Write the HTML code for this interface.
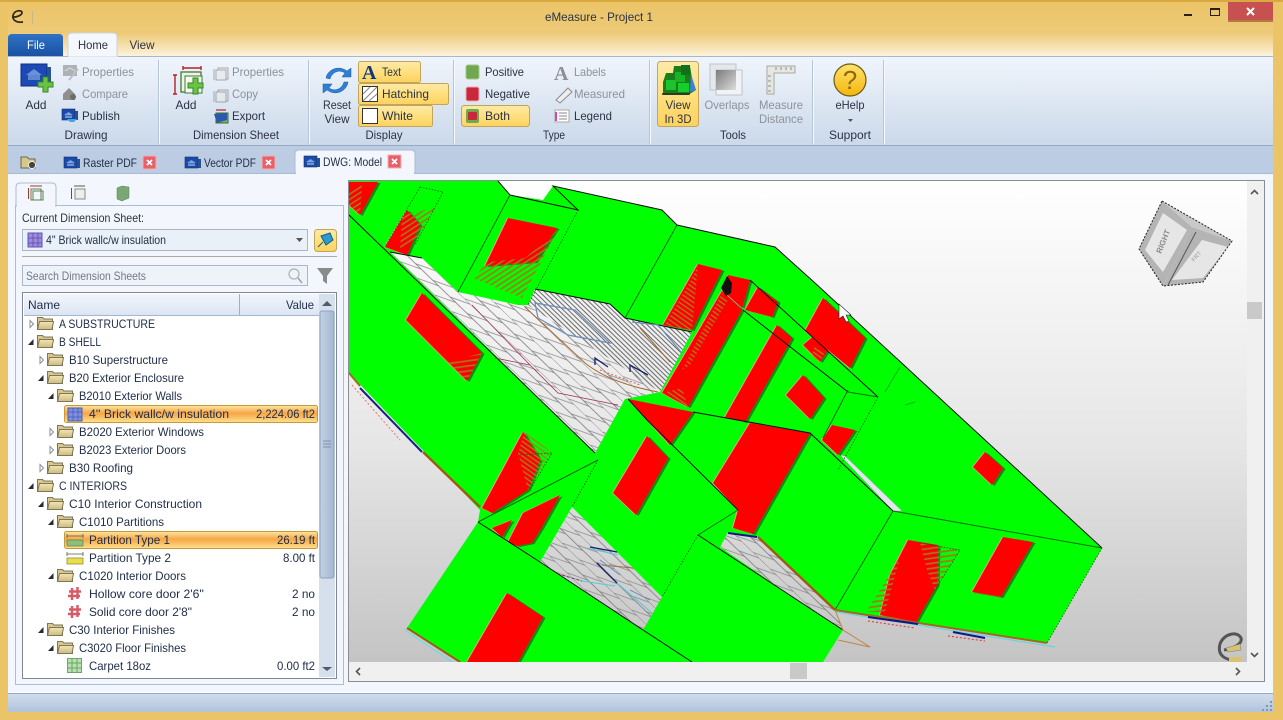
<!DOCTYPE html>
<html><head><meta charset="utf-8"><title>eMeasure - Project 1</title>
<style>
html,body{margin:0;padding:0;background:#ebc468;width:1283px;height:720px;overflow:hidden}
svg{display:block;position:absolute;left:0;top:0}
text{font-family:"Liberation Sans",sans-serif;font-size:12px;fill:#2b3242}
.g{fill:#8d929a}
.c{text-anchor:middle}
.e{text-anchor:end}
.t{fill:#1f2c47}
</style></head><body>
<svg width="1283" height="720" viewBox="0 0 1283 720" xmlns="http://www.w3.org/2000/svg">
<defs>
<linearGradient id="title" x1="0" y1="0" x2="0" y2="1"><stop offset="0" stop-color="#ebc467"/><stop offset=".55" stop-color="#eeca78"/><stop offset=".85" stop-color="#f8e6bd"/><stop offset="1" stop-color="#fdf6e8"/></linearGradient>
<linearGradient id="rib" x1="0" y1="0" x2="0" y2="1"><stop offset="0" stop-color="#f0f5fc"/><stop offset="1" stop-color="#cbd9ea"/></linearGradient>
<linearGradient id="file" x1="0" y1="0" x2="0" y2="1"><stop offset="0" stop-color="#2f72c4"/><stop offset="1" stop-color="#1a51a4"/></linearGradient>
<linearGradient id="gold" x1="0" y1="0" x2="0" y2="1"><stop offset="0" stop-color="#fdeaa8"/><stop offset=".5" stop-color="#ffe07f"/><stop offset="1" stop-color="#fdd25e"/></linearGradient>
<linearGradient id="hl" x1="0" y1="0" x2="0" y2="1"><stop offset="0" stop-color="#fde6a0"/><stop offset=".45" stop-color="#f6a748"/><stop offset=".6" stop-color="#f8b558"/><stop offset="1" stop-color="#fde28e"/></linearGradient>
<linearGradient id="status" x1="0" y1="0" x2="0" y2="1"><stop offset="0" stop-color="#d3deed"/><stop offset="1" stop-color="#b0c3dc"/></linearGradient>
<linearGradient id="head" x1="0" y1="0" x2="0" y2="1"><stop offset="0" stop-color="#f2f6fc"/><stop offset="1" stop-color="#dbe5f2"/></linearGradient>
<linearGradient id="thumb" x1="0" y1="0" x2="1" y2="0"><stop offset="0" stop-color="#c3d1e4"/><stop offset="1" stop-color="#a3b7d2"/></linearGradient>
<linearGradient id="bg3" gradientUnits="userSpaceOnUse" x1="0" y1="181" x2="0" y2="662"><stop offset="0" stop-color="#ffffff"/><stop offset=".55" stop-color="#e6e6e6"/><stop offset="1" stop-color="#c4c4c4"/></linearGradient>
<linearGradient id="fold" x1="0" y1="0" x2="0" y2="1"><stop offset="0" stop-color="#f3e6b6"/><stop offset="1" stop-color="#cdbb7e"/></linearGradient>
<linearGradient id="help" x1="0" y1="0" x2="0" y2="1"><stop offset="0" stop-color="#ffe26a"/><stop offset="1" stop-color="#f4b70c"/></linearGradient>
<linearGradient id="over" x1="0" y1="0" x2="1" y2="1"><stop offset="0" stop-color="#7b7b7b"/><stop offset="1" stop-color="#dcdcdc"/></linearGradient>
<pattern id="brick" width="24" height="18" patternUnits="userSpaceOnUse" patternTransform="rotate(44)">
<path d="M0 0H24M0 9H24" stroke="#777" stroke-width=".7"/>
<path d="M2 9L22 0M-10 18L10 9M14 18L34 9" stroke="#888" stroke-width=".7"/>
</pattern>
<pattern id="dense" width="3.4" height="3.4" patternUnits="userSpaceOnUse" patternTransform="rotate(44)">
<path d="M0 1.7H3.4" stroke="#444" stroke-width=".8"/>
</pattern>
<pattern id="rh" width="4.500" height="4.500" patternUnits="userSpaceOnUse" patternTransform="rotate(-33)">
<path d="M0 2.250H4.500" stroke="#a8741c" stroke-width="1.600"/>
</pattern>
<pattern id="rh2" width="5" height="5" patternUnits="userSpaceOnUse" patternTransform="rotate(-8)">
<path d="M0 2.500H5" stroke="#a8741c" stroke-width="1.700"/>
</pattern>
<pattern id="rh3" width="4" height="4" patternUnits="userSpaceOnUse" patternTransform="rotate(35)">
<path d="M0 2H4" stroke="#a5821f" stroke-width="1.300"/>
</pattern>
<clipPath id="vp"><rect x="349" y="181" width="898" height="481"/></clipPath>
<g id="fo"><path d="M0.5 -6.5H5.5L7 -5H15.5V5.5H0.5Z" fill="#d8c88e" stroke="#7d7658"/><path d="M0.5 5.5L2.5 -2.5H16.5L15 5.5Z" fill="url(#fold)" stroke="#7d7658"/></g>
<path id="ec" d="M2 -3.5V3.5L5.5 0Z" fill="#fff" stroke="#8a8f96"/>
<path id="ex" d="M5.5 -3V3H0Z" fill="#2a2a2a"/>
<g id="doc"><rect x="0" y="0" width="13" height="11" fill="#1c4aa8" stroke="#0d2f70" stroke-width=".6"/><rect x="13" y="2" width="3" height="9" fill="#2a4f8e"/><path d="M2 6L6.500 3L11 6Z" fill="#7ea4df"/><rect x="3" y="6.500" width="7" height="2.500" fill="#6e94d2"/></g>
<g id="x1"><rect x="0" y="0" width="13" height="13" fill="#e8606a" stroke="#f0b0b2"/><path d="M4 4L9 9M9 4L4 9" stroke="#fff" stroke-width="1.800"/></g>
<g id="hash"><path d="M4 1V13M9.500 0V12M1 4.500H13M0 9H12" stroke="#d85a66" stroke-width="2.400" fill="none"/></g>
<g id="ruler"><path d="M0 -5H16M0 -7V-3M16 -7V-3" stroke="#555" stroke-width=".8" fill="none"/></g>
<g id="reds">
<polygon points="349,182 378,182 360,215 349,205"/>
<polygon points="407,210 420,225 407,255 385,247"/>
<polygon points="508,218 557,228 535,262 485,266"/>
<polygon points="422,293 482,353 467,381 406,320"/>
<polygon points="698,264 722,270 692,330 663,325"/>
<polygon points="722,291 742,310 688,407 662,393"/>
<polygon points="728,275 750,280 742,308 722,290"/>
<polygon points="758,287 778,302 772,317 745,310"/>
<polygon points="777,325 792,338 745,422 725,417"/>
<polygon points="803,375 824,398 810,419 786,395"/>
<polygon points="823,298 865,338 850,368 805,331"/>
<polygon points="815,335 828,350 820,362 803,345"/>
<polygon points="832,425 855,430 838,455 822,440"/>
<polygon points="985,452 1003,468 992,485 973,467"/>
<polygon points="908,540 938,545 937,585 916,622 880,615 890,575"/>
<polygon points="1003,537 1033,542 1001,597 972,592"/>
<polygon points="647,436 668,458 636,515 613,493"/>
<polygon points="507,593 543,617 518,662 467,662"/>
<polygon points="523,432 540,460 528,490 492,513 482,508"/>
<polygon points="492,528 512,520 502,537"/>
<polygon points="523,513 560,495 542,527 532,543 517,546 508,542"/>
<polygon points="628,399 693,412 670,445"/>
<polygon points="750,423 810,433 753,534 733,528 738,510 713,483"/>
</g>
</defs>

<!-- window frame -->
<rect width="1283" height="720" fill="#ebc468"/>
<rect x="8" y="2" width="1265" height="56" fill="url(#title)"/>
<rect width="1283" height="2" fill="#d9a93f"/>
<path d="M12 17C16 17.500 22 15.500 22 12.500C22 10 15.500 10 13.500 14C11.500 19 15 23 23 22" fill="none" stroke="#2b2618" stroke-width="1.700"/>
<rect x="32" y="11" width="1" height="13" fill="#c9b98a"/>
<text x="599" y="21" class="c" textLength="108" lengthAdjust="spacingAndGlyphs">eMeasure - Project 1</text>
<rect x="1184" y="14" width="8" height="2" fill="#2a2012"/>
<rect x="1210.500" y="8.500" width="9" height="7" fill="none" stroke="#2a2012"/><rect x="1210" y="8" width="10" height="2" fill="#2a2012"/>
<rect x="1228" y="2" width="45" height="20" fill="#c75050"/>
<rect x="1228" y="20" width="45" height="2" fill="#b27a3c"/>
<path d="M1247 8L1254 15M1254 8L1247 15" stroke="#fff" stroke-width="2"/>

<!-- ribbon tabs -->
<path d="M8 56V38Q8 34 12 34H59Q63 34 63 38V56Z" fill="url(#file)"/>
<text x="36" y="49" class="c" style="fill:#fff" textLength="18" lengthAdjust="spacingAndGlyphs">File</text>
<path d="M68 57V37Q68 33 72 33H113Q117 33 117 37V57Z" fill="#f4f7fc" stroke="#c8d4e2"/>
<text x="93" y="49" class="c" textLength="30" lengthAdjust="spacingAndGlyphs">Home</text>
<text x="142" y="49" class="c" textLength="25" lengthAdjust="spacingAndGlyphs">View</text>

<!-- ribbon -->
<rect x="8" y="57" width="1265" height="88" fill="url(#rib)"/>
<rect x="8" y="56" width="60" height="1" fill="#a4b8d3"/><rect x="118" y="56" width="1155" height="1" fill="#a4b8d3"/>
<rect x="8" y="145" width="1265" height="1" fill="#94a9c6"/>
<path d="M158.500 60V144M308.500 60V144M453.500 60V144M649.500 60V144M812.500 60V144M883.500 60V144" stroke="#b6c6da"/>
<path d="M159.500 60V144M309.500 60V144M454.500 60V144M650.500 60V144M813.500 60V144M884.500 60V144" stroke="#f6f9fd"/>

<!-- drawing group -->
<rect x="21" y="64" width="26" height="22" fill="#1c49b6" stroke="#123079"/>
<rect x="47" y="67" width="4" height="19" fill="#2a5296"/>
<path d="M26 75L34 69L42 75Z" fill="#6a90d8"/><rect x="28" y="75" width="12" height="5" fill="#5f86cf"/>
<path d="M43 77H48V82H53V87H48V92H43V87H38V82H43Z" fill="#6cc246" stroke="#2f8a23"/>
<text x="36" y="109" class="c" textLength="21" lengthAdjust="spacingAndGlyphs">Add</text>
<g transform="translate(63,65)" opacity=".45"><rect width="14" height="11" fill="#666"/><path d="M2 6L7 3L12 6" stroke="#ccc" fill="none"/><path d="M15 4L6 15" stroke="#888" stroke-width="2"/></g>
<text x="82" y="76" class="g" textLength="52" lengthAdjust="spacingAndGlyphs">Properties</text>
<path d="M63 94L69 88L75 94V100H63Z" fill="#8f8f8f"/><circle cx="73" cy="97" r="3" fill="#6d6d6d"/>
<text x="82" y="98" class="g" textLength="46" lengthAdjust="spacingAndGlyphs">Compare</text>
<use href="#doc" x="62" y="109"/><path d="M67 119H77L74 122H70Z" fill="#39a9e0"/>
<text x="82" y="120" textLength="38" lengthAdjust="spacingAndGlyphs">Publish</text>
<text x="86" y="139" class="c" textLength="43" lengthAdjust="spacingAndGlyphs">Drawing</text>

<!-- dimension sheet -->
<path d="M183 68H201M183 66V70M201 66V70" stroke="#b5202a" stroke-width="1.400" fill="none"/>
<path d="M175 75V94M173 75H177M173 94H177" stroke="#b5202a" stroke-width="1.400" fill="none"/>
<rect x="181" y="72" width="20" height="20" fill="#eef3ea" stroke="#3d7c33" stroke-width="1.300"/>
<rect x="185" y="76" width="17" height="17" fill="#f5f8ee" stroke="#3d7c33"/>
<path d="M193 78H198V83H203V88H198V94H193V88H188V83H193Z" fill="#6cc246" stroke="#2f8a23"/>
<text x="186" y="109" class="c" textLength="21" lengthAdjust="spacingAndGlyphs">Add</text>
<g opacity=".5" stroke="#666" fill="#e8e8e8"><rect x="218" y="68" width="10" height="11"/><rect x="216" y="70" width="10" height="10"/><path d="M214 69V80" fill="none"/></g>
<text x="232" y="76" class="g" textLength="52" lengthAdjust="spacingAndGlyphs">Properties</text>
<g opacity=".5" stroke="#666" fill="#e8e8e8"><rect x="218" y="90" width="10" height="11"/><rect x="216" y="92" width="10" height="10"/><path d="M214 91V102" fill="none"/></g>
<text x="232" y="98" class="g" textLength="26" lengthAdjust="spacingAndGlyphs">Copy</text>
<path d="M216 110H226" stroke="#b5202a" stroke-width="1.200"/><rect x="216" y="113" width="12" height="10" fill="#7db46a" stroke="#3a6a35"/><path d="M214 114L227 113V120L217 123Z" fill="#2a5aa8"/>
<text x="232" y="120" textLength="33" lengthAdjust="spacingAndGlyphs">Export</text>
<text x="236" y="139" class="c" textLength="86" lengthAdjust="spacingAndGlyphs">Dimension Sheet</text>

<!-- display -->
<path d="M326 78C327 71 337 64 347 71L351 68V77H342L345 73C339 69 332 72 330 79Z" fill="#2f7fd5" stroke="#1a5aa0" stroke-width=".5"/>
<path d="M348 82C347 90 337 97 327 90L323 93V84H332L329 88C335 92 342 89 344 82Z" fill="#2f7fd5" stroke="#1a5aa0" stroke-width=".5"/>
<text x="337" y="109" class="c" textLength="28" lengthAdjust="spacingAndGlyphs">Reset</text><text x="337" y="123" class="c" textLength="25" lengthAdjust="spacingAndGlyphs">View</text>
<rect x="358.500" y="61.500" width="62" height="21" rx="2" fill="url(#gold)" stroke="#c2a45a"/>
<rect x="358.500" y="83.500" width="90" height="21" rx="2" fill="url(#gold)" stroke="#c2a45a"/>
<rect x="358.500" y="105.500" width="74" height="21" rx="2" fill="url(#gold)" stroke="#c2a45a"/>
<text x="362" y="79" style="font-family:'Liberation Serif',serif;font-size:20px;font-weight:bold;fill:#12367e">A</text>
<text x="382" y="76" textLength="19" lengthAdjust="spacingAndGlyphs">Text</text>
<rect x="362.500" y="86.500" width="15" height="15" fill="#fff" stroke="#333"/>
<path d="M363 94L370 87M363 101L377 87M369 101L377 94" stroke="#888" stroke-width="1.100"/>
<text x="382" y="98" textLength="47" lengthAdjust="spacingAndGlyphs">Hatching</text>
<rect x="362.500" y="108.500" width="15" height="15" fill="#fff" stroke="#333"/>
<text x="382" y="120" textLength="31" lengthAdjust="spacingAndGlyphs">White</text>
<text x="384" y="139" class="c" textLength="37" lengthAdjust="spacingAndGlyphs">Display</text>

<!-- type -->
<rect x="466" y="65" width="13" height="14" rx="2" fill="#6fa84f" stroke="#9fc98a"/>
<text x="485" y="76" textLength="39" lengthAdjust="spacingAndGlyphs">Positive</text>
<rect x="466" y="87" width="13" height="14" rx="2" fill="#c8283a" stroke="#f0a9b0"/>
<text x="485" y="98" textLength="45" lengthAdjust="spacingAndGlyphs">Negative</text>
<rect x="461.500" y="105.500" width="68" height="21" rx="3" fill="url(#gold)" stroke="#c2a45a"/>
<rect x="466" y="109" width="13" height="14" rx="2" fill="#6fa84f"/><rect x="468" y="112" width="9" height="8" rx="1" fill="#c8283a"/>
<text x="485" y="120" textLength="25" lengthAdjust="spacingAndGlyphs">Both</text>
<text x="554" y="80" style="font-family:'Liberation Serif',serif;font-size:20px;font-weight:bold;fill:#8b8f98">A</text>
<text x="574" y="76" class="g" textLength="32" lengthAdjust="spacingAndGlyphs">Labels</text>
<path d="M556 100L568 88L572 92L560 103Z" fill="#eee" stroke="#8a8a8a"/>
<text x="574" y="98" class="g" textLength="51" lengthAdjust="spacingAndGlyphs">Measured</text>
<rect x="555" y="110" width="14" height="12" fill="#fff" stroke="#aaa"/><path d="M559 113H567M559 116H567M559 119H567" stroke="#888"/><path d="M556 112V121" stroke="#d4a" stroke-width="2"/>
<text x="574" y="120" textLength="38" lengthAdjust="spacingAndGlyphs">Legend</text>
<text x="554" y="139" class="c" textLength="22" lengthAdjust="spacingAndGlyphs">Type</text>

<!-- tools -->
<rect x="657.500" y="61.500" width="41" height="65" rx="3" fill="url(#gold)" stroke="#c2a45a"/>
<path d="M663 82L666 73H673L674 66H690L692 78L696 90L688 95H663Z" fill="#1a7f1a"/>
<rect x="666" y="80" width="10" height="10" fill="#1cc32c"/><rect x="675" y="72" width="10" height="10" fill="#18b428"/><rect x="678" y="83" width="11" height="9" fill="#14cf2b"/><rect x="681" y="65" width="9" height="10" fill="#126f1e"/>
<path d="M691 74L696 90L690 92Z" fill="#3e7fe0"/><path d="M662 94H690" stroke="#2a2a2a" stroke-width="1.400"/>
<text x="678" y="109" class="c" textLength="25" lengthAdjust="spacingAndGlyphs">View</text><text x="678" y="123" class="c" textLength="27" lengthAdjust="spacingAndGlyphs">In 3D</text>
<rect x="710" y="64" width="26" height="26" fill="#e4e8ed" stroke="#c0c4c9"/>
<rect x="716" y="70" width="26" height="25" fill="#f1f3f6" stroke="#c0c4c9"/>
<rect x="716" y="70" width="20" height="20" fill="url(#over)"/>
<text x="727" y="109" class="c g" textLength="45" lengthAdjust="spacingAndGlyphs">Overlaps</text>
<path d="M767 66H795V73H774V94H767Z" fill="#e7e7e2" stroke="#a8a8a2"/>
<path d="M776 67V70M781 67V70M786 67V70M791 67V70M768 76H771M768 81H771M768 86H771M768 91H771" stroke="#8d8d88"/>
<text x="781" y="109" class="c g" textLength="44" lengthAdjust="spacingAndGlyphs">Measure</text><text x="781" y="123" class="c g" textLength="44" lengthAdjust="spacingAndGlyphs">Distance</text>
<text x="733" y="139" class="c" textLength="26" lengthAdjust="spacingAndGlyphs">Tools</text>

<!-- support -->
<circle cx="850" cy="80" r="16" fill="url(#help)" stroke="#6b5a16" stroke-width="1.200"/>
<text x="850" y="89" class="c" style="font-size:26px;fill:#8a6a10">?</text>
<text x="850" y="109" class="c" textLength="29" lengthAdjust="spacingAndGlyphs">eHelp</text>
<path d="M848 119H853L850.500 122Z" fill="#555"/>
<text x="850" y="139" class="c" textLength="42" lengthAdjust="spacingAndGlyphs">Support</text>

<!-- doc tab strip -->
<rect x="8" y="146" width="1265" height="27" fill="#bccde3"/>
<rect x="8" y="173" width="1265" height="1" fill="#a8bbd5"/>
<path d="M21 157H27L29 159H35V168H21Z" fill="#d6c78b" stroke="#6d664c"/><circle cx="32" cy="165" r="3.500" fill="#444" stroke="#fff" stroke-width=".8"/>
<use href="#doc" x="64" y="157"/><text x="83" y="167" class="t" textLength="54" lengthAdjust="spacingAndGlyphs">Raster PDF</text><use href="#x1" x="143" y="156"/>
<use href="#doc" x="185" y="157"/><text x="204" y="167" class="t" textLength="52" lengthAdjust="spacingAndGlyphs">Vector PDF</text><use href="#x1" x="262" y="156"/>
<path d="M295 173V154Q295 150 299 150H411Q415 150 415 154V173Z" fill="#f3f7fd" stroke="#a8bbd5"/>
<use href="#doc" x="304" y="156"/><text x="323" y="166" class="t" textLength="59" lengthAdjust="spacingAndGlyphs">DWG: Model</text><use href="#x1" x="388" y="155"/>

<!-- content -->
<rect x="8" y="174" width="1265" height="519" fill="#f3f7fd"/>
<rect x="296" y="172" width="118" height="3" fill="#f3f7fd"/>
<rect x="8" y="692" width="1265" height="1" fill="#fff"/>
<rect x="8" y="693" width="1265" height="19" fill="url(#status)"/>
<rect x="8" y="693" width="1265" height="1" fill="#8fa9c9"/>
<path d="M1270 701h2v2h-2zM1266 705h2v2h-2zM1270 705h2v2h-2zM1262 709h2v2h-2zM1266 709h2v2h-2zM1270 709h2v2h-2z" fill="#8397b2"/>

<!-- left panel -->
<rect x="15.500" y="205.500" width="328" height="479" fill="#f3f7fd" stroke="#a9bdd6"/>
<path d="M16 206V187Q16 183 20 183H52Q56 183 56 187V206Z" fill="#f3f7fd" stroke="#a9bdd6"/>
<rect x="17" y="204" width="38" height="3" fill="#f3f7fd"/>
<g fill="none" stroke="#666"><path d="M30 186H42" stroke="#a33"/><rect x="31" y="189" width="10" height="11" stroke="#5b7f4f"/><rect x="33" y="191" width="10" height="9" stroke="#5b7f4f"/><path d="M28.500 188V199" stroke="#a33"/></g>
<g fill="none"><path d="M74 186H85" stroke="#555"/><rect x="75" y="189" width="10" height="10" stroke="#888" fill="#eee"/><path d="M71.500 188V199" stroke="#a33"/></g>
<path d="M117 188L122 186L129 187V198L122 201L117 199Z" fill="#7aa873" stroke="#55805a" stroke-width=".5"/>
<text x="22" y="222" textLength="122" lengthAdjust="spacingAndGlyphs">Current Dimension Sheet:</text>
<rect x="22.500" y="229.500" width="285" height="21" fill="#eaf0f8" stroke="#a9b7c9"/>
<rect x="28" y="233" width="14" height="14" fill="#9a8be0" stroke="#6653b0"/><path d="M33 233V247M38 233V247M28 238H42M28 243H42" stroke="#5a48a8" stroke-width=".7"/>
<text x="46" y="244" class="t" textLength="120" lengthAdjust="spacingAndGlyphs">4" Brick wallc/w insulation</text>
<path d="M296 238H303L299.500 242Z" fill="#555"/>
<rect x="314.500" y="229.500" width="22" height="22" rx="3" fill="url(#gold)" stroke="#c2a45a"/>
<path d="M318 247L323 242M321 236L330 233L333 240L326 245Z" fill="#2d9ad0" stroke="#135f88"/>
<rect x="22" y="256" width="315" height="1" fill="#a9a9a9"/>
<rect x="22.500" y="265.500" width="285" height="20" fill="#eef3fa" stroke="#a9b7c9"/>
<text x="26" y="280" style="fill:#6f7a88" textLength="120" lengthAdjust="spacingAndGlyphs">Search Dimension Sheets</text>
<circle cx="294" cy="274" r="5" fill="none" stroke="#b0b4b8" stroke-width="1.300"/><path d="M298 278L302 283" stroke="#a0a4a8" stroke-width="1.600"/>
<path d="M317 268H333L327 276V284L323 281V276Z" fill="#8a8a8a"/>

<!-- tree -->
<rect x="22.500" y="292.500" width="314" height="386" fill="#fff" stroke="#7f8a96"/>
<rect x="24" y="294" width="295" height="21" fill="url(#head)"/>
<rect x="24" y="315" width="295" height="1" fill="#a6b8cf"/>
<rect x="239" y="294" width="1" height="21" fill="#9db0c9"/>
<text x="28" y="309" class="t" textLength="32" lengthAdjust="spacingAndGlyphs">Name</text>
<text x="314" y="309" class="e t" textLength="28" lengthAdjust="spacingAndGlyphs">Value</text>
<rect x="319" y="294" width="16" height="383" fill="#d6e0ed"/>
<rect x="320" y="311" width="14" height="267" rx="2" fill="url(#thumb)" stroke="#8ca2be"/>
<path d="M322 306L327 301L332 306Z" fill="#4d5a6a"/>
<path d="M322 667H332L327 671Z" fill="#4d5a6a"/>
<path d="M323 441H331M323 444H331M323 447H331" stroke="#7f93ad"/>

<rect x="64.500" y="405.500" width="253" height="17" rx="2" fill="url(#hl)" stroke="#c49a3c"/>
<rect x="64.500" y="531.500" width="253" height="17" rx="2" fill="url(#hl)" stroke="#c49a3c"/>

<g transform="translate(0,324)"><use href="#ec" x="28"/><use href="#fo" x="37"/><text x="59" y="4" class="t" textLength="96" lengthAdjust="spacingAndGlyphs">A SUBSTRUCTURE</text></g>
<g transform="translate(0,342)"><use href="#ex" x="28"/><use href="#fo" x="37"/><text x="59" y="4" class="t" textLength="42" lengthAdjust="spacingAndGlyphs">B SHELL</text></g>
<g transform="translate(0,360)"><use href="#ec" x="38"/><use href="#fo" x="47"/><text x="69" y="4" class="t" textLength="99" lengthAdjust="spacingAndGlyphs">B10 Superstructure</text></g>
<g transform="translate(0,378)"><use href="#ex" x="38"/><use href="#fo" x="47"/><text x="69" y="4" class="t" textLength="115" lengthAdjust="spacingAndGlyphs">B20 Exterior Enclosure</text></g>
<g transform="translate(0,396)"><use href="#ex" x="48"/><use href="#fo" x="57"/><text x="79" y="4" class="t" textLength="103" lengthAdjust="spacingAndGlyphs">B2010 Exterior Walls</text></g>
<g transform="translate(0,414)"><rect x="68" y="-6" width="14" height="13" fill="#7d8fe0" stroke="#4d5fb0"/><path d="M73 -6V7M78 -6V7M68 -2H82M68 3H82" stroke="#4a5ab0" stroke-width=".7"/><text x="89" y="4" class="t" textLength="140" lengthAdjust="spacingAndGlyphs">4'' Brick wallc/w insulation</text><text x="315" y="4" class="e t" textLength="59" lengthAdjust="spacingAndGlyphs">2,224.06 ft2</text></g>
<g transform="translate(0,432)"><use href="#ec" x="48"/><use href="#fo" x="57"/><text x="79" y="4" class="t" textLength="125" lengthAdjust="spacingAndGlyphs">B2020 Exterior Windows</text></g>
<g transform="translate(0,450)"><use href="#ec" x="48"/><use href="#fo" x="57"/><text x="79" y="4" class="t" textLength="107" lengthAdjust="spacingAndGlyphs">B2023 Exterior Doors</text></g>
<g transform="translate(0,468)"><use href="#ec" x="38"/><use href="#fo" x="47"/><text x="69" y="4" class="t" textLength="64" lengthAdjust="spacingAndGlyphs">B30 Roofing</text></g>
<g transform="translate(0,486)"><use href="#ex" x="28"/><use href="#fo" x="37"/><text x="59" y="4" class="t" textLength="68" lengthAdjust="spacingAndGlyphs">C INTERIORS</text></g>
<g transform="translate(0,504)"><use href="#ex" x="38"/><use href="#fo" x="47"/><text x="69" y="4" class="t" textLength="133" lengthAdjust="spacingAndGlyphs">C10 Interior Construction</text></g>
<g transform="translate(0,522)"><use href="#ex" x="48"/><use href="#fo" x="57"/><text x="79" y="4" class="t" textLength="85" lengthAdjust="spacingAndGlyphs">C1010 Partitions</text></g>
<g transform="translate(0,540)"><g transform="translate(67,1)"><rect x="0" y="-1" width="16" height="6" fill="#8cc07a" stroke="#5b7f4f" stroke-width=".7"/><path d="M0 -5H16M0 -7V-3M16 -7V-3" stroke="#555" stroke-width=".8" fill="none"/></g><text x="89" y="4" class="t" textLength="81" lengthAdjust="spacingAndGlyphs">Partition Type 1</text><text x="315" y="4" class="e t" textLength="38" lengthAdjust="spacingAndGlyphs">26.19 ft</text></g>
<g transform="translate(0,558)"><use href="#ruler" x="67" y="1"/><rect x="67" y="0" width="16" height="6" fill="#eadf4a" stroke="#84802a" stroke-width=".7"/><text x="89" y="4" class="t" textLength="82" lengthAdjust="spacingAndGlyphs">Partition Type 2</text><text x="315" y="4" class="e t" textLength="32" lengthAdjust="spacingAndGlyphs">8.00 ft</text></g>
<g transform="translate(0,576)"><use href="#ex" x="48"/><use href="#fo" x="57"/><text x="79" y="4" class="t" textLength="107" lengthAdjust="spacingAndGlyphs">C1020 Interior Doors</text></g>
<g transform="translate(0,594)"><use href="#hash" x="68" y="-7"/><text x="89" y="4" class="t" textLength="115" lengthAdjust="spacingAndGlyphs">Hollow core door 2'6''</text><text x="315" y="4" class="e t" textLength="23" lengthAdjust="spacingAndGlyphs">2 no</text></g>
<g transform="translate(0,612)"><use href="#hash" x="68" y="-7"/><text x="89" y="4" class="t" textLength="103" lengthAdjust="spacingAndGlyphs">Solid core door 2'8"</text><text x="315" y="4" class="e t" textLength="23" lengthAdjust="spacingAndGlyphs">2 no</text></g>
<g transform="translate(0,630)"><use href="#ex" x="38"/><use href="#fo" x="47"/><text x="69" y="4" class="t" textLength="106" lengthAdjust="spacingAndGlyphs">C30 Interior Finishes</text></g>
<g transform="translate(0,648)"><use href="#ex" x="48"/><use href="#fo" x="57"/><text x="79" y="4" class="t" textLength="107" lengthAdjust="spacingAndGlyphs">C3020 Floor Finishes</text></g>
<g transform="translate(0,666)"><rect x="67.500" y="-7.500" width="14" height="14" fill="#b9e0b0" stroke="#6aa864"/><path d="M72 -7V6M77 -7V6M68 -3H81M68 2H81" stroke="#6aa864"/><text x="89" y="4" class="t" textLength="62" lengthAdjust="spacingAndGlyphs">Carpet 18oz</text><text x="315" y="4" class="e t" textLength="38" lengthAdjust="spacingAndGlyphs">0.00 ft2</text></g>

<!-- 3D view frame -->
<rect x="348.500" y="180.500" width="916" height="501" fill="#f0f0f0" stroke="#8a8d92"/>
<rect x="349" y="181" width="898" height="481" fill="url(#bg3)"/>
<rect x="1247" y="302" width="15" height="17" fill="#c9c9c9"/>
<rect x="790" y="663" width="17" height="16" fill="#c9c9c9"/>
<path d="M1251 194L1254.500 190.500L1258 194M1251 653L1254.500 656.500L1258 653M360 668L356.500 671.500L360 675M1236 668L1239.500 671.500L1236 675" fill="none" stroke="#555" stroke-width="1.600"/>

<g clip-path="url(#vp)">
<!-- green silhouette -->
<polygon points="349,181 498,181 510,195 543,200 553,186 662,210 677,225 775,247 815,283 1102,548 1047,643 835,610 843,630 823,662 460,662 407,628 478,522 480,510 349,373" fill="#00ff00"/>
<!-- holes -->
<polygon points="390,252 422,258 458,292 518,305 528,305 535,289 610,304 625,318 692,332 660,392 625,399 595,453" fill="url(#bg3)"/>
<polygon points="390,252 422,258 458,292 518,305 528,305 660,392 625,399 595,453" fill="url(#brick)"/>
<polygon points="535,289 610,304 625,318 692,332 660,392 528,305" fill="url(#dense)"/>
<polygon points="572,507 662,597 643,630 540,562" fill="url(#bg3)"/>
<polygon points="572,507 662,597 643,630 540,562" fill="url(#brick)"/>
<polygon points="720,547 728,532 758,537 835,610 843,630 815,612" fill="url(#bg3)"/>
<polygon points="720,547 728,532 758,537 835,610 843,630 815,612" fill="url(#brick)"/>
<polygon points="840,455 845,456 902,511 893,511" fill="#e4e6ee" stroke="#9ab" stroke-width=".5"/>
<!-- windows -->
<use href="#reds" fill="#148a14" x="2.500" y="1"/>
<use href="#reds" fill="#ff9a9a" x="-1" y="0"/>
<use href="#reds" fill="#ff0000"/>
<!-- window hatches -->
<polygon points="349,190 362,185 360,215 349,205" fill="url(#rh)"/>
<polygon points="402,215 435,208 415,242 400,250" fill="url(#rh)"/>
<polygon points="558,230 522,298 473,278 488,262 525,258" fill="url(#rh)"/>
<polygon points="448,362 482,353 467,381" fill="url(#rh2)"/>
<polygon points="525,430 552,453 528,490 518,453" fill="url(#rh3)"/>
<polygon points="698,265 692,330 665,325 692,278" fill="url(#rh3)"/>
<polygon points="722,293 728,300 690,365 682,370" fill="url(#rh3)"/>
<polygon points="662,393 682,388 688,407" fill="url(#rh3)"/>
<polygon points="900,558 885,612 866,612" fill="url(#rh2)"/>
<polygon points="920,543 960,550 935,590 927,570" fill="url(#rh2)"/>
<polygon points="815,345 825,352 820,362 812,356" fill="url(#rh3)"/>
<!-- black marker -->
<polygon points="727,276 732,283 731,293 726,296 721,288" fill="#111"/>
<!-- dark edges -->
<g fill="none" stroke="#0c0c0c" stroke-width="1">
<path d="M498,181L510,195L578,210L553,186L662,210L677,225L775,247L815,283L1102,548"/>
<path d="M349,215L595,453"/>
<path d="M647,420L738,510M628,399L647,420M698,535L843,630"/>
<path d="M478,522L540,562L643,630L692,662"/>
<path d="M390,252L422,258M535,289L610,304L625,318L692,332"/>
<path d="M693,412L810,433L893,511"/>
<path d="M750,280L878,397"/>
<path d="M743,310L848,392"/>
</g>
<g fill="none" stroke="#0a6a0a" stroke-width="1">
<path d="M510,195L458,292M677,225L625,318M848,390L823,438"/>
<path d="M893,511L1102,548M893,511L835,610"/>
<path d="M738,510L698,535M478,522L598,460M848,392L878,397"/>
<path d="M900,367L885,392M915,402L905,405" opacity=".5"/>
</g>
<g fill="none" stroke="#0a5a0a" stroke-width=".8" stroke-dasharray="1.500 1.500">
<path d="M578,210L528,305M598,460L572,507M698,535L662,597M1102,548L1047,643M878,397L838,470M420,187L443,192L415,245M420,187L385,247"/>
<path d="M920,543L960,550L935,590"/>
<path d="M520,455L552,453L530,490"/>
</g>
<!-- coloured CAD lines -->
<g fill="none" stroke-width="1">
<path d="M360,388L422,452" stroke="#12247c" stroke-width="2"/>
<path d="M352,385L400,440" stroke="#f07070" stroke-dasharray="2 2"/>
<path d="M423,452L480,507" stroke="#a05a14" stroke-width="2.500"/>
<path d="M349,373L360,386" stroke="#a06a20" stroke-width="2"/>
<path d="M407,628L460,662" stroke="#a05a14" stroke-width="2"/>
<path d="M405,630L455,664" stroke="#5fe0e8"/>
<path d="M758,537L835,610" stroke="#a05a14" stroke-width="2.500"/>
<path d="M835,610L1047,643" stroke="#a06a20" stroke-width="2"/>
<path d="M836,612L1055,647" stroke="#55d8e0"/>
<path d="M868,617L918,624M953,632L985,638" stroke="#14148a" stroke-width="2"/>
<path d="M868,621L915,628M948,636L985,641" stroke="#e83030" stroke-dasharray="2 2"/>
<path d="M728,533L757,537" stroke="#14148a" stroke-width="2"/>
<path d="M835,610L843,630L870,647L838,640" stroke="#c4824a"/>
<path d="M525,307L585,363Q610,383 658,392" stroke="#a06a30"/>
<path d="M640,328L670,362" stroke="#a06a30"/>
<path d="M535,303L575,310L610,343L568,335L538,318Z" stroke="#6c8cbc" stroke-width="1.200"/>
<path d="M632,322L658,325L682,353" stroke="#6c8cbc" stroke-width="1.200"/>
<path d="M595,365V358L608,367M630,372V365L648,375" stroke="#14206a" stroke-width="1.300"/>
<path d="M472,305L530,365L558,393L618,405M495,358L530,365" stroke="#a03060" stroke-width=".8"/>
<path d="M600,370L640,385" stroke="#d06060" stroke-dasharray="2 2"/>
<path d="M587,548L618,555M617,583L652,613M562,575L582,581L615,586" stroke="#55c8d8"/>
<path d="M590,547L617,552M597,563L617,583" stroke="#14206a" stroke-width="1.300"/>
<path d="M602,565L633,568" stroke="#a07040"/>
<path d="M562,575L582,581" stroke="#c02060" stroke-dasharray="3 2"/>
<path d="M600,560L620,575M630,590L650,600" stroke="#6c8cbc"/>
</g>
<!-- cube -->
<polygon points="1162,201 1192,227 1163,286 1139,249" fill="#b4b4b4"/>
<polygon points="1192,227 1232,241 1203,282 1163,286" fill="#b4b4b4"/>
<polygon points="1162,201 1232,241 1192,227" fill="#c8c8c8"/>
<polygon points="1163,213 1187,230 1163,272 1145,250" fill="#e6e6e6"/>
<polygon points="1202,240 1228,247 1203,278 1172,280" fill="#e6e6e6"/>
<polygon points="1162,201 1232,241 1203,282 1163,286 1139,249" fill="none" stroke="#222" stroke-dasharray="2 1.500"/>
<path d="M1196,232L1168,285" stroke="#555" fill="none"/>
<text x="0" y="0" transform="translate(1161,254) rotate(-68)" style="font-size:8px;font-weight:bold;fill:#8a8a8a">RIGHT</text>
<text x="0" y="0" transform="translate(1194,262) rotate(-48)" style="font-size:6px;fill:#999">FRT</text>
<!-- cursor -->
<path d="M839,304L839,319L843,316L846,322L849,321L846,315L851,315Z" fill="#fff" stroke="#222" stroke-width=".6"/>
<!-- logo -->
<path d="M1224,650C1232,649 1243,644 1241,638C1238,631 1224,633 1220,644C1217,655 1224,661 1242,661" fill="none" stroke="#555" stroke-width="3"/>
<path d="M1226,648L1240,644L1241,650L1228,652Z" fill="#d8c470" stroke="#777" stroke-width=".5"/>
<rect x="1229" y="657" width="13" height="5" fill="#d8c470"/>
</g>
</svg>
</body></html>
